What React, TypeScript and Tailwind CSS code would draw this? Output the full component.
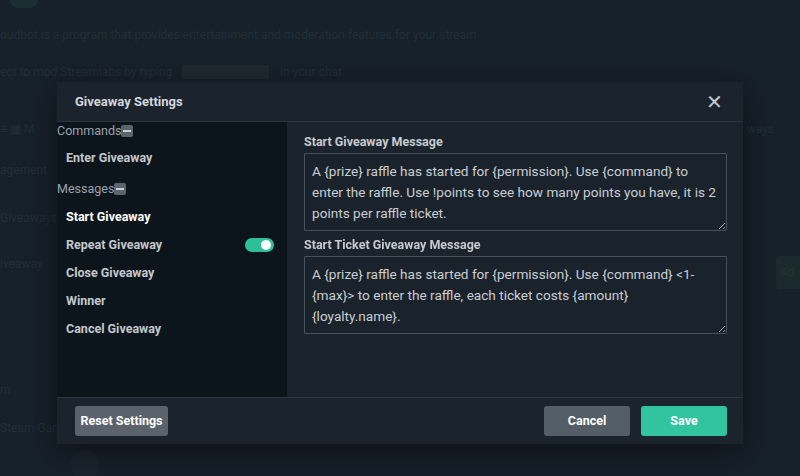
import React from "react";

const font = { fontFamily: "Roboto, 'Noto Sans', sans-serif" };

function Minus() {
  return (
    <span className="inline-flex h-[12px] w-[12px] items-center justify-center rounded-[2px] bg-[#5b656e]">
      <span className="block h-[2px] w-[8px] bg-[#c9ced2]" />
    </span>
  );
}

function SideItem({ label, active, toggle }: { label: string; active?: boolean; toggle?: boolean }) {
  return (
    <div className="flex h-7 items-center justify-between pl-[9px] pr-[13px]">
      <span className={"text-[12.5px] font-bold " + (active ? "text-white" : "text-[#c3c8cd]")}>{label}</span>
      {toggle && (
        <span className="flex h-[14px] w-[29px] items-center justify-end rounded-full bg-[#2fbf98] pr-[3px]">
          <span className="block h-[10px] w-[10px] rounded-full bg-white" />
        </span>
      )}
    </div>
  );
}

function Field({ label, value }: { label: string; value: string }) {
  return (
    <div className="flex flex-col gap-[3px]">
      <div className="text-[12.5px] font-bold leading-4 text-[#c6cbd0]">{label}</div>
      <textarea
        readOnly
        defaultValue={value}
        className="h-[78px] w-full resize-y rounded-[1px] border border-[#46525d] bg-[#1a232c] px-[7px] py-[7px] text-[13.6px] leading-[21px] text-[#c9ced3] outline-none"
        style={font}
      />
    </div>
  );
}

export default function App() {
  return (
    <div className="relative h-[476px] w-[800px] overflow-hidden bg-[#17212a]" style={font}>
      {/* dimmed page behind */}
      <div className="flex flex-col text-[12px] leading-4 text-[#222e38]">
        <div className="ml-[10px] h-[8px] w-[28px] rounded-b-full bg-[#1d2e33]" />
        <div className="mt-[19px]">oudbot is a program that provides entertainment and moderation features for your stream</div>
        <div className="mt-[21px] flex items-center">
          <span>ect to mod Streamlabs by typing</span>
          <span className="ml-[10px] h-[14px] w-[87px] bg-[#1f2830]" />
          <span className="ml-[11px]">in your chat</span>
        </div>
        <div className="mt-[41px] flex items-center justify-between">
          <span className="flex items-center gap-3">≡ ▦ M</span>
          <span className="mr-[26px]">ways</span>
        </div>
        <div className="mt-[25px]">agement</div>
        <div className="mt-[32px]">Giveaways</div>
        <div className="mt-[30px] flex items-start justify-between">
          <span>iveaway</span>
          <span className="h-[33px] w-[24px] rounded-l-[3px] bg-[#1b2a2d] pl-1 pt-2 text-[#233636]">Ad</span>
        </div>
        <div className="mt-[93px]">m</div>
        <div className="mt-[22px]">Steam Gam</div>
        <div className="ml-[70px] mt-[14px] h-[30px] w-[30px] rounded-full bg-[#1b252e]" />
      </div>

      {/* modal overlay */}
      <div className="absolute left-[57px] top-[82px] flex h-[362px] w-[686px] flex-col bg-[#1b242d] shadow-[0_8px_30px_rgba(0,0,0,0.45)]">
        <div className="flex h-10 items-center justify-between border-b border-[#2b3641] pl-[18px] pr-[20px] pt-px">
          <span className="text-[13px] font-bold text-[#d3d7db]">Giveaway Settings</span>
          <span className="text-[20px] leading-none text-[#c3c8cd]">✕</span>
        </div>
        <div className="flex flex-1">
          <div className="flex w-[230px] flex-col bg-[#0d151c] pt-px">
            <div className="flex h-4 items-center text-[12.5px] text-[#9aa3ab]">
              <span>Commands</span>
              <Minus />
            </div>
            <div className="mt-[5px]">
              <SideItem label="Enter Giveaway" />
            </div>
            <div className="mt-[9px] flex h-4 items-center text-[12.5px] text-[#9aa3ab]">
              <span>Messages</span>
              <Minus />
            </div>
            <div className="mt-[6px] flex flex-col">
              <SideItem label="Start Giveaway" active />
              <SideItem label="Repeat Giveaway" toggle />
              <SideItem label="Close Giveaway" />
              <SideItem label="Winner" />
              <SideItem label="Cancel Giveaway" />
            </div>
          </div>
          <div className="flex flex-1 flex-col gap-[6px] pl-[17px] pr-[16px] pt-[12px]">
            <Field
              label="Start Giveaway Message"
              value="A {prize} raffle has started for {permission}. Use {command} to enter the raffle. Use !points to see how many points you have, it is 2 points per raffle ticket."
            />
            <Field
              label="Start Ticket Giveaway Message"
              value="A {prize} raffle has started for {permission}. Use {command} <1-{max}> to enter the raffle, each ticket costs {amount} {loyalty.name}."
            />
          </div>
        </div>
        <div className="flex h-[47px] items-center justify-between border-t border-[#2b3641] pl-[18px] pr-[16px]">
          <button className="h-[30px] w-[93px] rounded-[3px] bg-[#5a636c] text-[12.5px] font-bold text-white">Reset Settings</button>
          <div className="flex gap-[11px]">
            <button className="h-[30px] w-[86px] rounded-[3px] bg-[#545e67] text-[12.5px] font-bold text-white">Cancel</button>
            <button className="h-[30px] w-[86px] rounded-[3px] bg-[#31c49f] text-[12.5px] font-bold text-white">Save</button>
          </div>
        </div>
      </div>
    </div>
  );
}
